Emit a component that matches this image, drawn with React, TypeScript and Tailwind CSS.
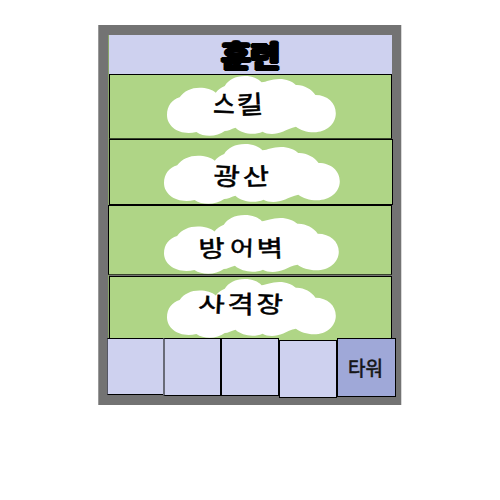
type Syllable = { char: string; className: string };

type Row = {
  box: string;
  cloud: string;
  label: string;
  syllables: Syllable[];
};

const rows: Row[] = [
  {
    box: "ml-px h-[65px] w-[283px] border-b-[#38452b] pl-[57px] pt-px",
    cloud: "h-[60px] w-[169px]",
    label: "pl-[45px] pt-[14px]",
    syllables: [
      { char: "스", className: "w-[26px] scale-x-90 scale-y-100 rotate-2" },
      { char: "킬", className: "w-[26px] scale-x-110 scale-y-95 -rotate-3" },
    ],
  },
  {
    box: "ml-px h-[66px] w-[284px] pl-[54px] pt-[4px]",
    cloud: "h-[60px] w-[176px]",
    label: "pl-[51px] pt-[18px]",
    syllables: [
      { char: "광", className: "w-[29px] scale-x-110 scale-y-95 rotate-3" },
      { char: "산", className: "w-[28px] scale-x-110 scale-y-90 -rotate-3" },
    ],
  },
  {
    box: "h-[70px] w-[284px] border-b-[#38452b] pl-[55px] pt-[9px]",
    cloud: "h-[59px] w-[175px]",
    label: "pl-[36px] pt-[19px]",
    syllables: [
      { char: "방", className: "w-[30px] scale-x-110 scale-y-90 -rotate-3" },
      { char: "어", className: "w-[28px] scale-x-100 scale-y-80 rotate-2" },
      { char: "벽", className: "w-[28px] scale-x-110 scale-y-90 -rotate-2" },
    ],
  },
  {
    box: "ml-px mt-px h-[62px] w-[283px] border-b-0 pl-[57px] pt-[2px]",
    cloud: "h-[59px] w-[169px]",
    label: "pl-[33px] pt-[11px]",
    syllables: [
      { char: "사", className: "w-[29px] scale-x-110 scale-y-80 rotate-3" },
      { char: "격", className: "w-[29px] scale-x-110 scale-y-90" },
      { char: "장", className: "w-[28px] scale-x-110 scale-y-90 rotate-3" },
    ],
  },
];

function CloudShape() {
  return (
    <svg
      className="col-start-1 row-start-1 h-full w-full"
      viewBox="0 0 168.5 60"
      preserveAspectRatio="none"
      fill="white"
    >
      <path d="M12.6 21.3C17 15 24 11.7 32.6 11.7C39 11.7 45 13.5 48.6 16.7C51 13.5 54 11.5 57.6 10C61 4 68 0 77.6 0C85 0 91 2.5 94.3 6.3C99 6 104 3 112 3C119 3 125 5.5 128.5 9C136 8.5 144 13 148 19C160 19 168.3 27 168.3 37.3C168.3 48 159 56.3 146.6 56.3C139 56.3 133 54 128.6 50.7C124 51.5 119 54 116 55.5C108 59 100 58.5 95.3 55.7C87 59.5 75 58 68.3 51.7C64 53 61 55 57.6 55C50 61 37 61.5 29.3 56C13 60 0 51 0 39C0 30 5 23.5 12.6 21.3Z" />
    </svg>
  );
}

function MenuRow({ row }: { row: Row }) {
  return (
    <div className={`flex shrink-0 items-start border border-black bg-[#afd586] ${row.box}`}>
      <div className={`grid shrink-0 ${row.cloud}`}>
        <CloudShape />
        <div
          className={`z-10 col-start-1 row-start-1 flex text-[26px] leading-[26px] font-normal [-webkit-text-stroke:0.6px_black] ${row.label}`}
        >
          {row.syllables.map((s) => (
            <span key={s.char} className={`inline-block h-[26px] ${s.className}`}>
              {s.char}
            </span>
          ))}
        </div>
      </div>
    </div>
  );
}

export default function App() {
  return (
    <main className="flex h-[500px] w-[500px] items-start overflow-hidden bg-white pt-[25px] pl-[98px] font-['Noto_Sans_CJK_KR','Noto_Sans',sans-serif] text-black">
      <section className="flex h-[380px] w-[304px] shrink-0 flex-col border-r border-l border-r-[#d8d8d8] border-l-[#999999] bg-[#737373] pt-[10px] pl-[9px]">
        <div className="flex h-[303px] w-[285px] flex-col bg-[linear-gradient(to_right,#89a768_1px,#737373_1px)]">
          <header className="ml-px flex h-[39px] w-[283px] shrink-0 justify-center bg-[#ced1ef]">
            <h1 className="scale-x-105 text-[30px] leading-[39px] font-black [text-shadow:1px_0_black,-1px_0_black,2px_0_black,-2px_0_black,0_1px_black,0_-1px_black,1px_1px_black,-1px_-1px_black,1px_-1px_black,-1px_1px_black]">
              훈련
            </h1>
          </header>
          {rows.map((row) => (
            <MenuRow key={row.label} row={row} />
          ))}
        </div>
        <nav className="-ml-px flex items-start">
          <div className="h-[57px] w-[56px] border border-r-0 border-black border-l-[#555763] bg-[#ced1ef]" />
          <div className="h-[58px] w-[58px] border border-l-2 border-black border-l-[#696b78] bg-[#ced1ef]" />
          <div className="h-[58px] w-[58px] border border-black bg-[#ced1ef]" />
          <div className="h-[60px] w-[58px] border-t-2 border-[#afd586]">
            <div className="h-[58px] border border-black bg-[#ced1ef]" />
          </div>
          <div className="flex h-[59px] w-[59px] items-center justify-center border border-black bg-[#9fa8d8] text-[20px] leading-5 font-normal text-[#151515] [-webkit-text-stroke:0.6px_#151515]">
            <span className="mr-[2px] scale-x-95">타워</span>
          </div>
        </nav>
      </section>
    </main>
  );
}
